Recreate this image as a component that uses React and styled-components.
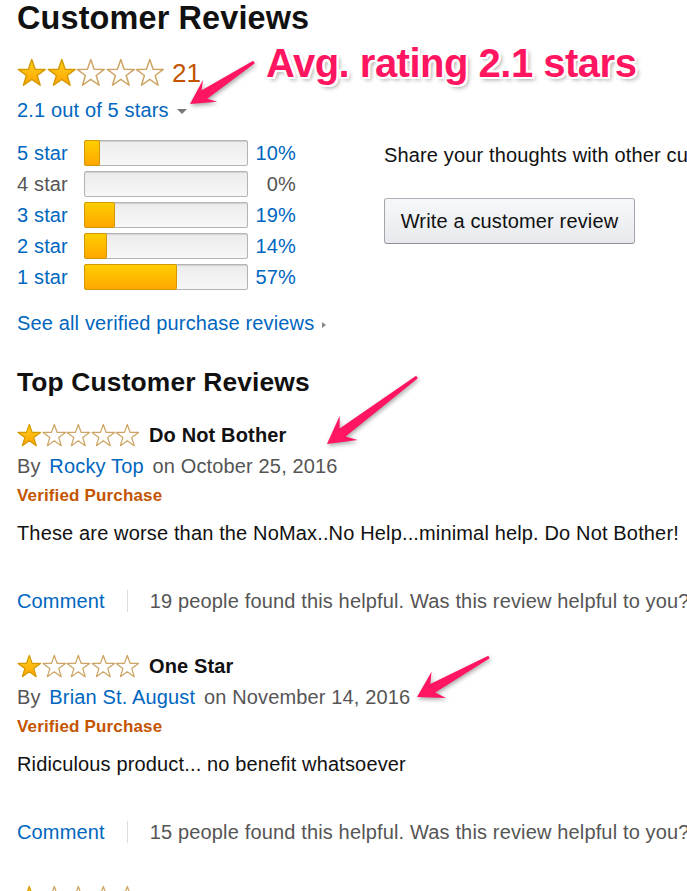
import React from 'react';
import styled, { createGlobalStyle } from 'styled-components';

const GlobalStyle = createGlobalStyle`
  html, body {
    margin: 0;
    padding: 0;
    background: #fff;
  }
  body {
    font-family: "Liberation Sans", Arial, sans-serif;
    color: #111;
    overflow: hidden;
  }
`;

const histogram = [
  { label: '5 star', pct: 10 },
  { label: '4 star', pct: 0 },
  { label: '3 star', pct: 19 },
  { label: '2 star', pct: 14 },
  { label: '1 star', pct: 57 },
];

const reviews = [
  {
    stars: 1,
    title: 'Do Not Bother',
    author: 'Rocky Top',
    date: 'October 25, 2016',
    body: 'These are worse than the NoMax..No Help...minimal help. Do Not Bother!',
    helpful: 19,
  },
  {
    stars: 1,
    title: 'One Star',
    author: 'Brian St. August',
    date: 'November 14, 2016',
    body: 'Ridiculous product... no benefit whatsoever',
    helpful: 15,
  },
];

const arrows = [
  { tail: [254, 62], tip: [190, 104], head: 24, half: 13 },
  { tail: [417, 377], tip: [327, 444], head: 27, half: 15 },
  { tail: [489, 657], tip: [417, 697], head: 25, half: 15 },
];

const STAR_POINTS =
  '12,1.3 14.7,9.08 22.94,9.25 16.37,14.22 18.76,22.1 12,17.4 5.24,22.1 7.63,14.22 1.06,9.25 9.3,9.08';

const Star = ({ filled, size }) => (
  <svg width={size} height={size} viewBox="0 0 24 24">
    <polygon
      points={STAR_POINTS}
      fill={filled ? 'url(#starGold)' : '#fff'}
      stroke={filled ? '#d49a00' : '#cda463'}
      strokeWidth="1.2"
      strokeLinejoin="round"
    />
  </svg>
);

const Stars = ({ count, size }) => (
  <StarGroup>
    {[0, 1, 2, 3, 4].map((i) => (
      <Star key={i} filled={i < count} size={size} />
    ))}
  </StarGroup>
);

function arrowPoints({ tail, tip, head, half }) {
  const dx = tail[0] - tip[0];
  const dy = tail[1] - tip[1];
  const len = Math.hypot(dx, dy);
  const d = [dx / len, dy / len];
  const n = [-d[1], d[0]];
  const at = (dist, off) => [
    tip[0] + d[0] * dist + n[0] * off,
    tip[1] + d[1] * dist + n[1] * off,
  ];
  const neck = head * 0.72;
  const pts = [
    tip,
    at(head, half),
    at(neck, 5),
    at(len, 1.5),
    at(len, -1.5),
    at(neck, -5),
    at(head, -half),
  ];
  return pts.map((p) => p.map((v) => v.toFixed(1)).join(',')).join(' ');
}

const App = () => (
  <Page>
    <GlobalStyle />
    <Defs width="0" height="0">
      <defs>
        <linearGradient id="starGold" x1="0" y1="0" x2="0" y2="1">
          <stop offset="0" stopColor="#ffd21f" />
          <stop offset="1" stopColor="#ffa200" />
        </linearGradient>
      </defs>
    </Defs>

    <Title>Customer Reviews</Title>
    <Summary>
      <Stars count={2} size={29.6} />
      <Count>21</Count>
    </Summary>
    <RatingLink>
      2.1 out of 5 stars
      <Caret />
    </RatingLink>

    <HistoWrap>
      <Histogram>
        {histogram.map((row) => (
          <React.Fragment key={row.label}>
            <RowLabel $muted={row.pct === 0}>{row.label}</RowLabel>
            <Meter>
              {row.pct > 0 && <Fill style={{ width: `${(row.pct * 164) / 100}px` }} />}
            </Meter>
            <Percent $muted={row.pct === 0}>{row.pct}%</Percent>
          </React.Fragment>
        ))}
      </Histogram>
      <ShareBox>
        <ShareText>Share your thoughts with other customers</ShareText>
        <WriteButton>Write a customer review</WriteButton>
      </ShareBox>
    </HistoWrap>

    <SeeAll>
      See all verified purchase reviews
      <SmallCaret />
    </SeeAll>

    <SubTitle>Top Customer Reviews</SubTitle>
    <ReviewList>
      {reviews.map((r) => (
        <Review key={r.title}>
          <StarRow>
            <Stars count={r.stars} size={24.6} />
            <ReviewTitle>{r.title}</ReviewTitle>
          </StarRow>
          <ByLine>
            By <Author>{r.author}</Author> on {r.date}
          </ByLine>
          <Verified>Verified Purchase</Verified>
          <ReviewBody>{r.body}</ReviewBody>
          <CommentRow>
            <CommentLink>Comment</CommentLink>
            <Divider />
            <Helpful>{r.helpful} people found this helpful. Was this review helpful to you?</Helpful>
          </CommentRow>
        </Review>
      ))}
      <Review>
        <StarRow>
          <Stars count={1} size={24.6} />
        </StarRow>
      </Review>
    </ReviewList>

    <Annotation>Avg. rating 2.1 stars</Annotation>
    <ArrowLayer width="687" height="891" viewBox="0 0 687 891">
      {arrows.map((a, i) => (
        <polygon key={i} points={arrowPoints(a)} fill="#ff1560" />
      ))}
    </ArrowLayer>
  </Page>
);

const Page = styled.div`
  position: relative;
  width: 687px;
  height: 891px;
  overflow: hidden;
  padding-left: 17px;
  box-sizing: border-box;
  white-space: nowrap;
  letter-spacing: 0.15px;
`;

const Defs = styled.svg`
  position: absolute;
`;

const Title = styled.h2`
  margin: 0;
  font-size: 32.4px;
  line-height: 36px;
  font-weight: bold;
  color: #111;
`;

const StarGroup = styled.span`
  display: inline-flex;
  align-items: center;
  flex-shrink: 0;
`;

const Summary = styled.div`
  display: flex;
  align-items: center;
  height: 30px;
  margin-top: 22px;
`;

const Count = styled.span`
  margin-left: 7px;
  font-size: 26px;
  line-height: 30px;
  color: #c45500;
`;

const RatingLink = styled.div`
  margin-top: 10px;
  font-size: 20px;
  line-height: 24px;
  color: #0066c0;
`;

const Caret = styled.span`
  display: inline-block;
  margin-left: 8px;
  vertical-align: middle;
  border-top: 5px solid #777;
  border-left: 5px solid transparent;
  border-right: 5px solid transparent;
`;

const HistoWrap = styled.div`
  display: flex;
  gap: 88px;
  margin-top: 18px;
`;

const Histogram = styled.div`
  display: grid;
  flex-shrink: 0;
  grid-template-columns: 67px 164px 48px;
  grid-auto-rows: 26px;
  row-gap: 5px;
  align-items: center;
`;

const RowLabel = styled.span`
  font-size: 20px;
  color: ${(p) => (p.$muted ? '#555' : '#0066c0')};
`;

const Percent = styled.span`
  font-size: 20px;
  text-align: right;
  color: ${(p) => (p.$muted ? '#555' : '#0066c0')};
`;

const Meter = styled.div`
  height: 26px;
  box-sizing: border-box;
  border: 1px solid #b4b4b4;
  border-radius: 2px;
  background: linear-gradient(to bottom, #ececec, #f7f7f7);
  box-shadow: inset 0 1px 1px rgba(0, 0, 0, 0.12);
`;

const Fill = styled.div`
  height: 26px;
  margin: -1px 0 0 -1px;
  box-sizing: border-box;
  border: 1px solid #d39700;
  border-radius: 2px;
  background: linear-gradient(to bottom, #ffce00, #ffa700);
`;

const ShareBox = styled.div`
  display: flex;
  flex-direction: column;
  align-items: flex-start;
`;

const ShareText = styled.div`
  font-size: 20px;
  line-height: 30px;
  color: #111;
`;

const WriteButton = styled.button`
  margin-top: 28px;
  width: 251px;
  height: 46px;
  padding: 0;
  border: 1px solid;
  border-color: #adb1b8 #a2a6ac #8d9096;
  border-radius: 3px;
  background: linear-gradient(to bottom, #f7f8fa, #e7e9ec);
  font-family: "Liberation Sans", Arial, sans-serif;
  font-size: 20px;
  letter-spacing: 0.15px;
  color: #111;
  cursor: pointer;
`;

const SeeAll = styled.div`
  margin-top: 21px;
  font-size: 20px;
  line-height: 24px;
  color: #0066c0;
`;

const SmallCaret = styled.span`
  display: inline-block;
  margin-left: 8px;
  vertical-align: middle;
  border-left: 4px solid #888;
  border-top: 3.5px solid transparent;
  border-bottom: 3.5px solid transparent;
`;

const SubTitle = styled.h3`
  margin: 32px 0 0;
  font-size: 26.4px;
  line-height: 30px;
  font-weight: bold;
  color: #111;
`;

const ReviewList = styled.div`
  display: flex;
  flex-direction: column;
  gap: 35px;
  margin-top: 23px;
`;

const Review = styled.div`
  display: flex;
  flex-direction: column;
`;

const StarRow = styled.div`
  display: flex;
  align-items: center;
  height: 30px;
`;

const ReviewTitle = styled.span`
  margin-left: 9px;
  font-size: 20px;
  font-weight: bold;
  color: #111;
`;

const ByLine = styled.div`
  margin-top: 1px;
  font-size: 20px;
  line-height: 30px;
  color: #555;
`;

const Author = styled.span`
  margin: 0 3px;
  color: #0066c0;
`;

const Verified = styled.div`
  font-size: 17px;
  line-height: 30px;
  font-weight: bold;
  color: #c45500;
`;

const ReviewBody = styled.div`
  margin-top: 7px;
  font-size: 20px;
  line-height: 30px;
  color: #111;
`;

const CommentRow = styled.div`
  display: flex;
  align-items: center;
  height: 30px;
  margin-top: 38px;
  font-size: 20px;
`;

const CommentLink = styled.span`
  flex-shrink: 0;
  color: #0066c0;
`;

const Divider = styled.span`
  flex-shrink: 0;
  width: 1px;
  height: 22px;
  margin: 0 22px;
  background: #ddd;
`;

const Helpful = styled.span`
  flex-shrink: 0;
  color: #555;
`;

const Annotation = styled.div`
  position: absolute;
  left: 266px;
  top: 43px;
  font-size: 40px;
  line-height: 40px;
  font-weight: bold;
  letter-spacing: -0.5px;
  color: #ff1560;
  text-shadow: -2px -2px 0 #fff, 2px -2px 0 #fff, -2px 2px 0 #fff, 2px 2px 0 #fff,
    0 -2px 0 #fff, 0 2px 0 #fff, -2px 0 0 #fff, 2px 0 0 #fff,
    3px 3px 4px rgba(0, 0, 0, 0.35);
`;

const ArrowLayer = styled.svg`
  position: absolute;
  left: 0;
  top: 0;
  pointer-events: none;
  filter: drop-shadow(1px 2px 2px rgba(0, 0, 0, 0.35));
`;

export default App;
